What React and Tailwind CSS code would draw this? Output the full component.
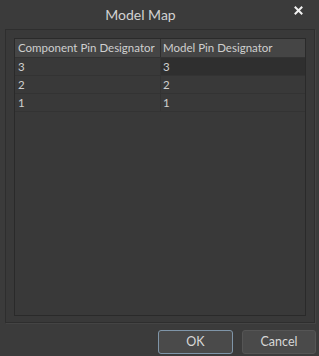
import React from 'react';

const rows = [
    { comp: '3', model: '3', selected: true },
    { comp: '2', model: '2' },
    { comp: '1', model: '1' },
];

const App = () => {
    return (
        <div
            className="w-[319px] h-[356px] bg-[#3b3b3b] text-[#cfcfcf] flex flex-col overflow-hidden"
            style={{ fontFamily: 'Lato, "Open Sans", sans-serif' }}
        >
            {/* title bar */}
            <div className="h-[29px] flex items-center justify-center pr-[38px] relative shrink-0">
                <span className="text-[14px] text-[#d2d2d2] leading-none">Model Map</span>
                <svg className="absolute right-[16px] top-[6px]" width="9" height="9" viewBox="0 0 9 9">
                    <path d="M1.5 1.5 L7.5 7.5 M7.5 1.5 L1.5 7.5" stroke="#f2f2f2" strokeWidth="2" strokeLinecap="square" />
                </svg>
            </div>

            {/* panel */}
            <div className="mx-[5px] w-[310px] h-[294px] border border-[#2e2e2e] bg-[#393939] shadow-[1px_1px_0_#444] px-[8px] pt-[8px] pb-[6px] shrink-0">
                <div className="h-full border border-[#2a2a2a] bg-[#393939] text-[11.5px] text-[#cfcfcf] leading-none whitespace-nowrap">
                    <div className="flex h-[19px] bg-[#454545] border-b border-[#333]">
                        <div className="w-[146px] pl-[3px] flex items-center border-r border-[#2f2f2f]">
                            Component Pin Designator
                        </div>
                        <div className="flex-1 pl-[2px] flex items-center">Model Pin Designator</div>
                    </div>
                    {rows.map((r) => (
                        <div key={r.comp} className="flex h-[18px] border-b border-[#333] text-[#cfcfcf]">
                            <div className="w-[146px] pl-[3px] flex items-center border-r border-[#333]">
                                {r.comp}
                            </div>
                            <div
                                className={`flex-1 pl-[2px] flex items-center ${r.selected ? 'bg-[#2f2f2f]' : ''}`}
                            >
                                {r.model}
                            </div>
                        </div>
                    ))}
                </div>
            </div>

            {/* buttons */}
            <div className="flex justify-end gap-[9px] pr-[3px] pt-[7px]">
                <button className="w-[75px] h-[24px] rounded-[3px] border border-[#7f95a8] bg-[#4a4a4a] text-[12.5px] text-[#d8d8d8]">
                    OK
                </button>
                <button className="w-[74px] h-[24px] rounded-[3px] border border-[#555] bg-[#4a4a4a] text-[12.5px] text-[#d8d8d8]">
                    Cancel
                </button>
            </div>
        </div>
    );
};

export default App;
